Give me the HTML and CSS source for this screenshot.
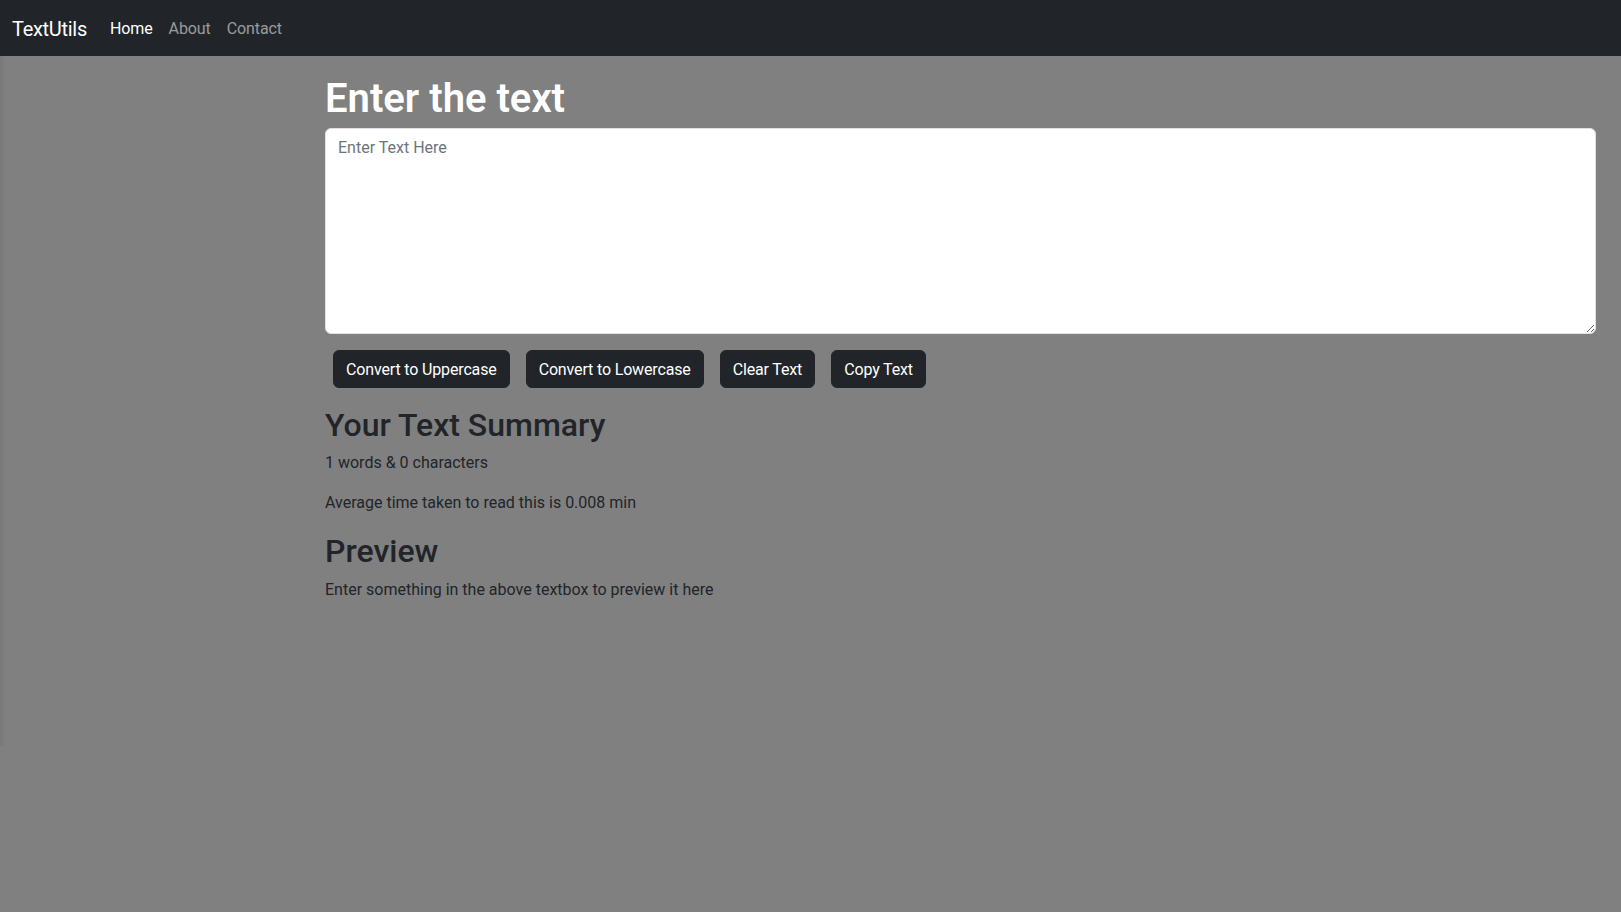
FILE: index.html
```html
<!DOCTYPE html>
<html lang="en">
<head>
<meta charset="utf-8">
<title>TextUtils</title>
<link rel="stylesheet" href="styles.css">
</head>
<body>
<nav class="navbar">
  <a class="brand" href="#">TextUtils</a>
  <ul class="nav-links">
    <li><a class="nav-link active" href="#">Home</a></li>
    <li><a class="nav-link" href="#">About</a></li>
    <li><a class="nav-link" href="#">Contact</a></li>
  </ul>
</nav>
<div class="edge-shade"></div>
<main class="page">
  <section class="container first">
    <h1 class="title">Enter the text</h1>
    <div class="field">
      <textarea class="text-box" rows="8" placeholder="Enter Text Here"></textarea>
    </div>
    <div class="actions">
      <button class="btn">Convert to Uppercase</button>
      <button class="btn">Convert to Lowercase</button>
      <button class="btn">Clear Text</button>
      <button class="btn">Copy Text</button>
    </div>
  </section>
  <section class="container summary">
    <h2>Your Text Summary</h2>
    <p>1 words &amp; 0 characters</p>
    <p>Average time taken to read this is 0.008 min</p>
    <h2>Preview</h2>
    <p>Enter something in the above textbox to preview it here</p>
  </section>
</main>
</body>
</html>
```

FILE: styles.css
```css
* { box-sizing: border-box; }
html, body { margin: 0; padding: 0; }
body {
  background: #808080;
  color: #212529;
  font-family: Roboto, "Noto Sans", "Liberation Sans", sans-serif;
  font-size: 16px;
  line-height: 1.5;
  min-height: 912px;
}
.navbar {
  background: #212529;
  height: 56px;
  display: flex;
  align-items: center;
  padding: 9px 12px 7px;
}
.brand {
  color: #fff;
  font-size: 20px;
  line-height: 30px;
  letter-spacing: -0.3px;
  padding: 5px 0;
  margin-right: 15px;
  text-decoration: none;
}
.nav-links {
  list-style: none;
  margin: 0;
  padding: 0;
  display: flex;
}
.nav-link {
  display: block;
  padding: 8px;
  letter-spacing: -0.1px;
  color: rgba(255,255,255,.55);
  text-decoration: none;
}
.nav-link.active { color: #fff; }
.edge-shade {
  position: absolute;
  left: 0;
  top: 56px;
  width: 6px;
  height: 690px;
  background: linear-gradient(to right, rgba(0,0,0,.06), rgba(0,0,0,0));
  pointer-events: none;
}
.page {
  padding: 0 25px 0 325px;
}
.container { margin: 16px 0; }
.title {
  color: #fff;
  font-size: 40px;
  font-weight: 600;
  line-height: 1.2;
  padding-top: 3px;
  margin: 0 0 5px;
}
.field { margin-bottom: 16px; }
.text-box {
  display: block;
  width: 100%;
  height: 206px;
  padding: 7px 12px 5px;
  font: inherit;
  color: #212529;
  background: #fff;
  border: 1px solid #dee2e6;
  border-radius: 6px;
  resize: vertical;
  outline: none;
}
.text-box::placeholder { color: #6c757d; }
.actions { display: flex; gap: 16px; padding-left: 8px; }
.btn {
  font: inherit;
  letter-spacing: -0.15px;
  color: #fff;
  background: #212529;
  border: 1px solid #212529;
  border-radius: 6px;
  padding: 7px 12px 5px;
  line-height: 24px;
  cursor: pointer;
}
.summary h2 {
  font-size: 32px;
  font-weight: 500;
  line-height: 1.2;
  padding-top: 2px;
  margin: 0 0 6px;
}
.summary p {
  padding-top: 1px;
  margin: 0 0 15px;
}
```
